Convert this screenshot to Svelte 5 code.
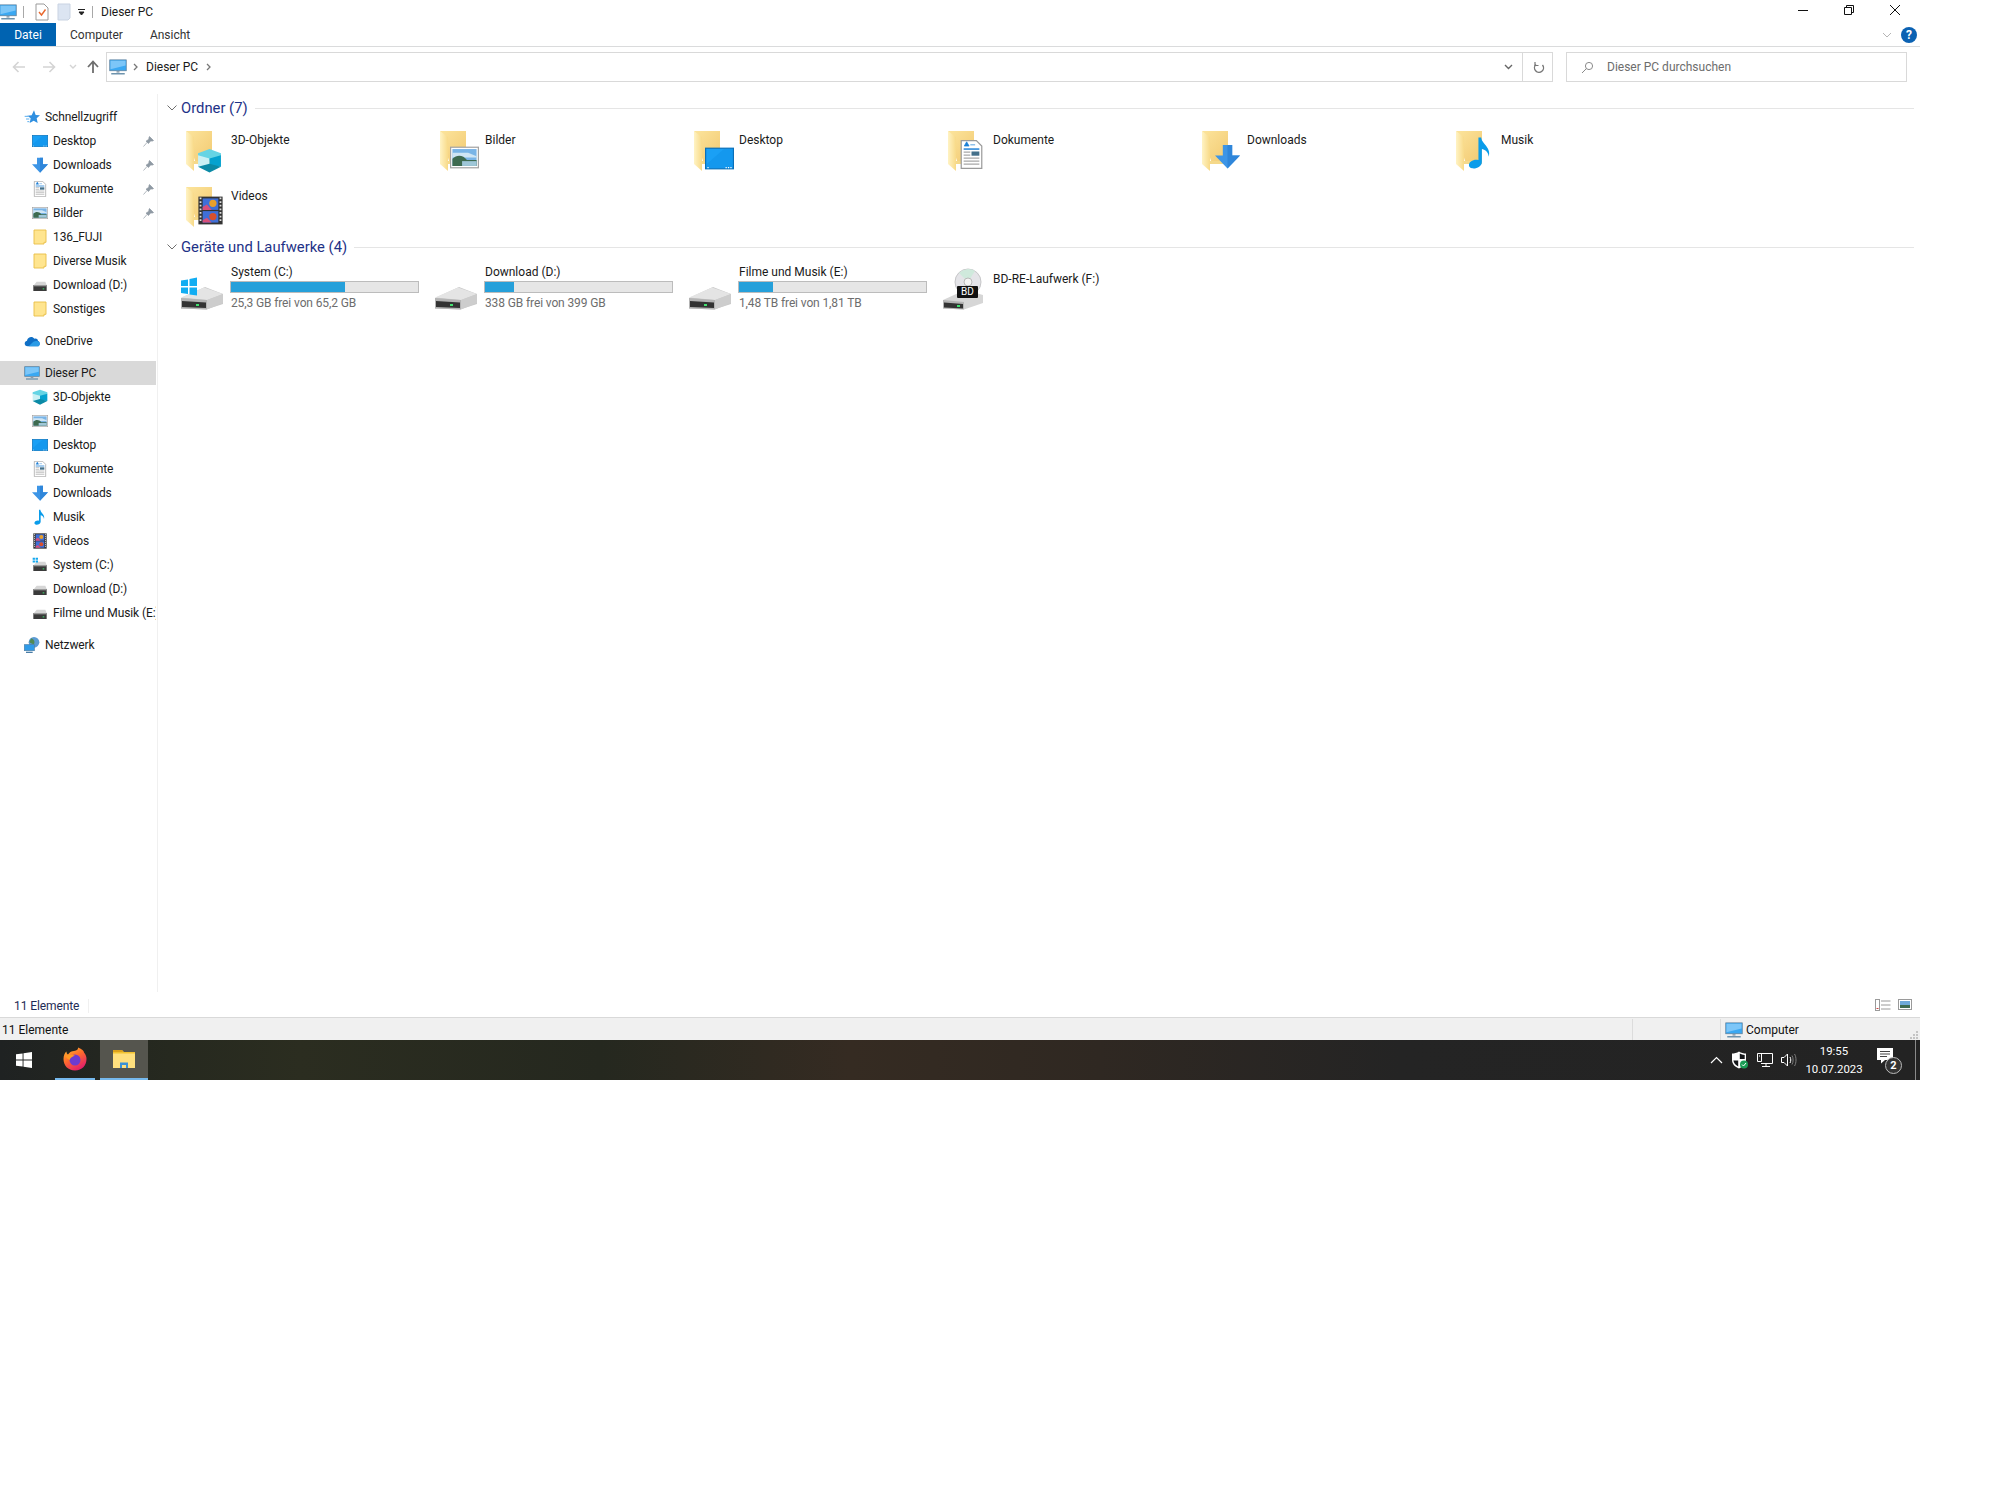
<script lang="ts">
	// Windows 10 Explorer window, "Dieser PC" view, with the taskbar underneath.
	type NavItem = { label: string; icon: string; pinned?: boolean; selected?: boolean };

	const navGroups: { head: NavItem; items: NavItem[] }[] = [
		{
			head: { label: 'Schnellzugriff', icon: 'star' },
			items: [
				{ label: 'Desktop', icon: 'desktop', pinned: true },
				{ label: 'Downloads', icon: 'downloads', pinned: true },
				{ label: 'Dokumente', icon: 'docs', pinned: true },
				{ label: 'Bilder', icon: 'pictures', pinned: true },
				{ label: '136_FUJI', icon: 'folder' },
				{ label: 'Diverse Musik', icon: 'folder' },
				{ label: 'Download (D:)', icon: 'disk' },
				{ label: 'Sonstiges', icon: 'folder' }
			]
		},
		{ head: { label: 'OneDrive', icon: 'cloud' }, items: [] },
		{
			head: { label: 'Dieser PC', icon: 'pc', selected: true },
			items: [
				{ label: '3D-Objekte', icon: 'cube' },
				{ label: 'Bilder', icon: 'pictures' },
				{ label: 'Desktop', icon: 'desktop' },
				{ label: 'Dokumente', icon: 'docs' },
				{ label: 'Downloads', icon: 'downloads' },
				{ label: 'Musik', icon: 'music' },
				{ label: 'Videos', icon: 'video' },
				{ label: 'System (C:)', icon: 'sysdisk' },
				{ label: 'Download (D:)', icon: 'disk' },
				{ label: 'Filme und Musik (E:)', icon: 'disk' }
			]
		},
		{ head: { label: 'Netzwerk', icon: 'network' }, items: [] }
	];

	// size/right/bottom place the overlay glyph on the folder; each one sits differently
	const folders = [
		{ label: '3D-Objekte', icon: 'cube', size: 25, right: 7, bottom: 3 },
		{ label: 'Bilder', icon: 'pictures', size: 29, right: 4, bottom: 4 },
		{ label: 'Desktop', icon: 'desktop', size: 29, right: 3, bottom: 3 },
		{ label: 'Dokumente', icon: 'docs', size: 29, right: 5, bottom: 7 },
		{ label: 'Downloads', icon: 'downloads', size: 25, right: 5, bottom: 7 },
		{ label: 'Musik', icon: 'music', size: 33, right: 2, bottom: 7 },
		{ label: 'Videos', icon: 'video', size: 29, right: 4, bottom: 7 }
	];

	const drives = [
		{ label: 'System (C:)', used: 61.2, info: '25,3 GB frei von 65,2 GB', win: true },
		{ label: 'Download (D:)', used: 15.3, info: '338 GB frei von 399 GB', win: false },
		{ label: 'Filme und Musik (E:)', used: 18.4, info: '1,48 TB frei von 1,81 TB', win: false }
	];
</script>

{#snippet art(name: string, size: number)}
	<svg class="art" width={size} height={size} viewBox="0 0 24 24" aria-hidden="true">
		{#if name === 'desktop'}
			<rect x="0.5" y="3.5" width="23" height="17" fill="#1aa0f5" stroke="#0a6fb8" />
			<path d="M1 17 L16 4 H23 V20 H1 Z" fill="#0d8fe8" opacity="0.5" />
			<path d="M2 19.5 H4 M17 19.5 H22" stroke="#fff" stroke-dasharray="1 1" />
		{:else if name === 'cube'}
			<path d="M12 1 L23 5 V8 L12 12 L1 8 V5 Z" fill="#65d4e4" />
			<path d="M1 7 L12 10 V17 L1 18 Z" fill="#c9f0f4" />
			<path d="M23 7 L12 10 V17 L23 18 Z" fill="#05a2cf" />
			<path d="M1 18 L12 15 L23 18 L12 23.5 Z" fill="#0b8aa6" />
		{:else if name === 'pictures'}
			<rect x="0.5" y="3.5" width="23" height="17" fill="#fff" stroke="#a2a2a2" />
			<rect x="2" y="5" width="20" height="14" fill="#79b4e6" />
			<path d="M2 8 H15 L22 11 V12 H2 Z" fill="#cfe5f4" />
			<path d="M2 13 C6 9 11 10 14 14 H22 V19 H2 Z" fill="#3e6b50" />
			<rect x="10" y="15" width="12" height="4" fill="#9fc7d8" />
		{:else if name === 'docs'}
			<path d="M3.5 0.5 H16 L20.5 5 V23.5 H3.5 Z" fill="#fff" stroke="#9a9a9a" />
			<path d="M6 5 L8 1.5 L10 5 Z M11 4 H15" fill="#1b7fd6" stroke="#1b7fd6" stroke-width="0.6" />
			<path d="M5.5 7.5 H18.5" stroke="#1b7fd6" stroke-width="1.2" />
			<path d="M5.5 10 H11 M5.5 12.5 H11 M5.5 15 H18.5 M5.5 17.5 H18.5 M5.5 20 H18.5" stroke="#a8a8a8" />
			<rect x="12" y="9.5" width="6.5" height="3.5" fill="#44708a" />
		{:else if name === 'downloads'}
			<path d="M7.5 1 H16.5 V11 H24 L12 23.5 L0 11 H7.5 Z" fill="#3d95e6" />
			<path d="M12 1 H16.5 V11 H24 L12 23.5 Z" fill="#2f86da" />
		{:else if name === 'music'}
			<path d="M10.5 1 H12.5 C13 6 20 8 18 15 C17.5 11 15 10 13 9.5 V19 C13 22 9 24 6 23.5 C3 23 3 20 5 18.5 C7 17 9 17 10.5 17.5 Z" fill="#0a9cea" />
		{:else if name === 'video'}
			<rect x="2" y="0.5" width="20" height="23" fill="#333" />
			<rect x="5.5" y="2" width="13" height="9.5" fill="#3f6fd8" />
			<rect x="5.5" y="12.5" width="13" height="9.5" fill="#3f6fd8" />
			<path d="M5.5 9 L9 7 L13 11.5 H5.5 Z M5.5 20 L9 18 L13 22 H5.5 Z" fill="#d84f7a" />
			<circle cx="14" cy="6" r="3" fill="#e9a02c" />
			<circle cx="14" cy="17" r="3" fill="#d8502c" />
			<path d="M3 2 H4.5 M3 5 H4.5 M3 8 H4.5 M3 11 H4.5 M3 14 H4.5 M3 17 H4.5 M3 20 H4.5 M19.5 2 H21 M19.5 5 H21 M19.5 8 H21 M19.5 11 H21 M19.5 14 H21 M19.5 17 H21 M19.5 20 H21" stroke="#ddd" stroke-width="1.4" />
		{:else if name === 'folder'}
			<path d="M3 1.5 H21 V20 H18 V22.5 H3 Z" fill="#ffe58f" stroke="#e9c04a" stroke-width="1.4" />
		{:else if name === 'disk' || name === 'sysdisk'}
			<path d="M3 12 L7 7 H20 L22 12 Z" fill="#d6d6d6" />
			<path d="M2 12 H22 V21 H2 Z" fill="#3a3a3a" />
			<rect x="2" y="12" width="20" height="2" fill="#9a9a9a" />
			<rect x="16" y="17" width="2.4" height="1.6" fill="#3dd56b" />
			{#if name === 'sysdisk'}
				<path d="M1 1 H4.4 V4.2 H1 Z M5.4 1 H9 V4.2 H5.4 Z M1 5.2 H4.4 V8.4 H1 Z M5.4 5.2 H9 V8.4 H5.4 Z" fill="#13a7ee" />
			{/if}
		{:else if name === 'star'}
			<path d="M15 2 L17.5 9 L24 9.5 L19 14 L20.5 21 L14.5 17.5 L8.5 21 L10 14 L5 10 L11.5 9.5 Z" fill="#2f8fe0" />
			<path d="M1 11 H6 M3 15 H8 M5 19 H8" stroke="#4ea8ec" stroke-width="1.4" />
		{:else if name === 'cloud'}
			<path d="M5.5 20 C0 20 -0.5 12.5 4.5 11.5 C5.5 6 12.5 4 15.5 8.5 C19 7.5 21 10 21 12 C24.5 12.5 25 20 20 20 Z" fill="#0f6fc6" />
			<path d="M7 20 L14 13 C17 11.5 21 12 21.5 13 C24.5 13 24.5 20 20 20 Z" fill="#2a9be6" />
		{:else if name === 'pc'}
			<rect x="1" y="2.5" width="22" height="14.5" fill="#3aa8f2" stroke="#5f7f99" />
			<path d="M2 3.5 H22 V10 L2 15 Z" fill="#7cc6f8" />
			<path d="M10 17.5 H14 V19.5 H10 Z" fill="#8a9cab" />
			<path d="M3 21 H21" stroke="#6d93ad" stroke-width="2" />
		{:else if name === 'network'}
			<circle cx="15" cy="8" r="8" fill="#5b9bd3" />
			<path d="M11 2 C15 4 17 7 15 11 C13 10 10 10 8 7 Z" fill="#4f8a55" />
			<rect x="0.5" y="11.5" width="15" height="9" fill="#2f9be8" stroke="#4b7da6" />
			<path d="M3 23 H13" stroke="#4b7da6" stroke-width="2" />
		{/if}
	</svg>
{/snippet}

{#snippet bigFolder()}
	<svg class="art" width="48" height="48" viewBox="0 0 48 48" aria-hidden="true">
		<defs>
			<linearGradient id="fb" x1="0" y1="0" x2="1" y2="1">
				<stop offset="0" stop-color="#fce49c" />
				<stop offset="1" stop-color="#f2ca72" />
			</linearGradient>
			<linearGradient id="ff" x1="0" y1="0" x2="1" y2="0">
				<stop offset="0" stop-color="#fff3c4" />
				<stop offset="1" stop-color="#f8da88" />
			</linearGradient>
		</defs>
		<path d="M5 3 H31 V33 H14 Z" fill="url(#fb)" />
		<path d="M5 3 L13 9 V43 L5 36 Z" fill="url(#ff)" />
		<path d="M13 33 H31 V36 H13 Z" fill="#f5d98a" />
	</svg>
{/snippet}

{#snippet bigDrive(win: boolean)}
	<svg class="art" width="48" height="48" viewBox="0 0 48 48" aria-hidden="true">
		<path d="M5 34 L29 23 L47 30 V40 L30 45.5 L5 44.5 Z" fill="#c9c9c9" />
		<path d="M5 33.5 L28 23.5 L47 30 L31 36 Z" fill="#e4e4e4" />
		<path d="M5 34 L31 36 V45.5 L5 44.5 Z" fill="#b4b4b4" />
		<path d="M6 37 L30 38.5 V44 L6 43 Z" fill="#333" />
		<path d="M31 36 L47 30 V39 L31 45.5 Z" fill="#cdcdcd" />
		<rect x="20" y="40" width="3" height="2" fill="#42e06f" />
		{#if win}
			<path d="M5 16.5 L12 15.5 V22 H5 Z M13.5 15 L21 13.5 V22 H13.5 Z M5 23.5 H12 V30 L5 29 Z M13.5 23.5 H21 V31.5 L13.5 30.5 Z" fill="#12adf2" />
		{/if}
	</svg>
{/snippet}

{#snippet bluray()}
	<svg class="art" width="48" height="48" viewBox="0 0 48 48" aria-hidden="true">
		<circle cx="30" cy="18" r="13" fill="#e4e4e8" stroke="#c6c6c8" />
		<path d="M30 18 L21 9 A13 13 0 0 1 37 7 Z" fill="#cfe9dc" />
		<circle cx="30" cy="18" r="4" fill="#f4f4f4" stroke="#b9b9b9" />
		<path d="M5 36 L27 26 L45 31 V39 L26 45.5 L5 44.5 Z" fill="#d6d6d6" />
		<path d="M5 36 L26 38 V45.5 L5 44.5 Z" fill="#b4b4b4" />
		<path d="M6 38.5 L25 40 V44.5 L6 43.5 Z" fill="#333" />
		<rect x="19" y="41" width="3" height="2" fill="#42e06f" />
		<rect x="19" y="22" width="21" height="12" rx="1" fill="#111" />
	</svg>
{/snippet}

<div class="window">
	<div class="titlebar">
		<span class="qa-pc">{@render art('pc', 18)}</span>
		<span class="vsep"></span>
		<svg class="qa-doc" width="14" height="18" viewBox="0 0 14 18" aria-hidden="true">
			<path d="M1 1 H9 L13 5 V17 H1 Z" fill="#fff" stroke="#9a9a9a" />
			<path d="M4 9 L6.5 12 L10.5 6.5" fill="none" stroke="#e8672d" stroke-width="1.4" />
		</svg>
		<svg class="qa-blank" width="14" height="18" viewBox="0 0 14 18" aria-hidden="true">
			<path d="M1 1 H13 V15 L11 17 H1 Z" fill="#dce5f2" stroke="#c9d3e2" />
		</svg>
		<svg class="qa-drop" width="8" height="8" viewBox="0 0 8 8" aria-hidden="true">
			<path d="M0 1.5 H7 M1 4 H6 L3.5 7 Z" stroke="#222" fill="#222" />
		</svg>
		<span class="vsep"></span>
		<span class="title">Dieser PC</span>
		<div class="winctl">
			<svg width="12" height="12" viewBox="0 0 12 12" aria-hidden="true"><path d="M1 6.5 H11" stroke="#111" /></svg>
			<svg width="12" height="12" viewBox="0 0 12 12" aria-hidden="true">
				<path d="M1.5 3.5 H8.5 V10.5 H1.5 Z M3.5 3.5 V1.5 H10.5 V8.5 H8.5" fill="none" stroke="#111" />
			</svg>
			<svg width="12" height="12" viewBox="0 0 12 12" aria-hidden="true"><path d="M1 1 L11 11 M11 1 L1 11" stroke="#111" /></svg>
		</div>
	</div>

	<div class="tabs">
		<span class="tab-file">Datei</span>
		<span class="tab">Computer</span>
		<span class="tab">Ansicht</span>
		<svg class="ribbon-chev" width="10" height="6" viewBox="0 0 10 6" aria-hidden="true">
			<path d="M1 1 L5 5 L9 1" fill="none" stroke="#b5b5b5" />
		</svg>
		<span class="help">?</span>
	</div>

	<div class="addressrow">
		<div class="navbtns">
			<svg width="14" height="12" viewBox="0 0 14 12" aria-hidden="true"><path d="M13 6 H2 M6.5 1 L1.5 6 L6.5 11" fill="none" stroke="#d4d4d4" stroke-width="1.6" /></svg>
			<svg width="14" height="12" viewBox="0 0 14 12" aria-hidden="true"><path d="M1 6 H12 M7.5 1 L12.5 6 L7.5 11" fill="none" stroke="#d4d4d4" stroke-width="1.6" /></svg>
			<svg width="8" height="6" viewBox="0 0 8 6" aria-hidden="true"><path d="M1 1 L4 4 L7 1" fill="none" stroke="#d4d4d4" stroke-width="1.4" /></svg>
			<svg width="14" height="14" viewBox="0 0 14 14" aria-hidden="true"><path d="M7 13 V2 M2 7 L7 1.5 L12 7" fill="none" stroke="#6e6e6e" stroke-width="1.8" /></svg>
		</div>
		<div class="address">
			{@render art('pc', 18)}
			<svg class="crumb" width="5" height="8" viewBox="0 0 5 8" aria-hidden="true"><path d="M1 1 L4 4 L1 7" fill="none" stroke="#777" stroke-width="1.3" /></svg>
			<span class="crumb-text">Dieser PC</span>
			<svg class="crumb" width="5" height="8" viewBox="0 0 5 8" aria-hidden="true"><path d="M1 1 L4 4 L1 7" fill="none" stroke="#777" stroke-width="1.3" /></svg>
			<svg class="addr-chev" width="9" height="6" viewBox="0 0 9 6" aria-hidden="true"><path d="M1 1 L4.5 4.5 L8 1" fill="none" stroke="#666" stroke-width="1.4" /></svg>
			<span class="addr-refresh">
				<svg width="12" height="13" viewBox="0 0 12 13" aria-hidden="true">
					<path d="M3 3.5 A4.5 4.5 0 1 0 9.5 4" fill="none" stroke="#777" stroke-width="1.4" />
					<path d="M2 1 V4.5 H5.5" fill="none" stroke="#777" stroke-width="1.2" />
				</svg>
			</span>
		</div>
		<div class="search">
			<svg width="13" height="13" viewBox="0 0 13 13" aria-hidden="true">
				<circle cx="8" cy="5" r="3.6" fill="none" stroke="#8a8a8a" />
				<path d="M5.4 7.6 L1 12" stroke="#8a8a8a" />
			</svg>
			<span>Dieser PC durchsuchen</span>
		</div>
	</div>

	<div class="body">
		<nav class="pane">
			{#each navGroups as group}
				<div class="navgroup">
					<div class="navrow top" class:selected={group.head.selected}>
						{@render art(group.head.icon, 16)}
						<span>{group.head.label}</span>
					</div>
					{#each group.items as item}
						<div class="navrow sub">
							{@render art(item.icon, 16)}
							<span class="navlabel">{item.label}</span>
							{#if item.pinned}
								<svg class="pin" width="11" height="11" viewBox="0 0 11 11" aria-hidden="true">
									<path d="M6.5 0.5 L10.5 4.5 L9.5 5 L7.5 5 L5.5 7.5 L3 5.2 L5.8 3.3 L6 1.5 Z M4 6.5 L0.5 10.5" fill="#8f9aa4" stroke="#8f9aa4" stroke-width="0.7" />
								</svg>
							{/if}
						</div>
					{/each}
				</div>
			{/each}
		</nav>

		<main class="content">
			<div class="grouphead first">
				<svg width="10" height="6" viewBox="0 0 10 6" aria-hidden="true"><path d="M0.5 0.5 L5 5 L9.5 0.5" fill="none" stroke="#6e6e6e" /></svg>
				<span>Ordner (7)</span>
				<i></i>
			</div>
			<div class="grid folders">
				{#each folders as f}
					<div class="item">
						<div class="bigicon">
							{@render bigFolder()}
							<span class="overlay" style="right: {f.right}px; bottom: {f.bottom}px">{@render art(f.icon, f.size)}</span>
						</div>
						<span class="itemname">{f.label}</span>
					</div>
				{/each}
			</div>

			<div class="grouphead">
				<svg width="10" height="6" viewBox="0 0 10 6" aria-hidden="true"><path d="M0.5 0.5 L5 5 L9.5 0.5" fill="none" stroke="#6e6e6e" /></svg>
				<span>Geräte und Laufwerke (4)</span>
				<i></i>
			</div>
			<div class="grid drives">
				{#each drives as d}
					<div class="drive">
						<div class="bigicon">{@render bigDrive(d.win)}</div>
						<div class="driveinfo">
							<span class="itemname">{d.label}</span>
							<div class="bar"><div class="fill" style="width: {d.used}%"></div></div>
							<span class="free">{d.info}</span>
						</div>
					</div>
				{/each}
				<div class="drive">
					<div class="bigicon">
						{@render bluray()}
						<span class="bdtag">BD</span>
					</div>
					<span class="itemname bdname">BD-RE-Laufwerk (F:)</span>
				</div>
			</div>
		</main>
	</div>

	<div class="viewstatus">
		<span class="count">11 Elemente</span>
		<div class="viewicons">
			<svg width="16" height="12" viewBox="0 0 16 12" aria-hidden="true">
				<rect x="0.5" y="0.5" width="4" height="11" fill="#fff" stroke="#9a9a9a" />
				<path d="M6 2 H15.5 M6 6 H15.5 M6 10 H15.5" stroke="#9a9a9a" />
				<path d="M1.5 9.5 H3.5" stroke="#c44" />
			</svg>
			<svg width="14" height="11" viewBox="0 0 14 11" aria-hidden="true">
				<rect x="0.5" y="0.5" width="13" height="10" fill="#fff" stroke="#9a9a9a" />
				<rect x="2" y="2" width="10" height="7" fill="#6ea9d8" />
				<path d="M2 6 H12 V9 H2 Z" fill="#3e6b50" />
			</svg>
		</div>
	</div>

	<div class="statusbar">
		<span class="status-count">11 Elemente</span>
		<span class="status-sep first"></span>
		<span class="status-sep"></span>
		<span class="status-pc">{@render art('pc', 18)}<span>Computer</span></span>
		<svg class="grip" width="9" height="9" viewBox="0 0 9 9" aria-hidden="true">
			<path d="M7 1 H9 V3 H7 Z M4 4 H6 V6 H4 Z M7 4 H9 V6 H7 Z M1 7 H3 V9 H1 Z M4 7 H6 V9 H4 Z M7 7 H9 V9 H7 Z" fill="#c4c4c4" />
		</svg>
	</div>

	<footer class="taskbar">
		<svg class="start" width="16" height="16" viewBox="0 0 16 16" aria-hidden="true">
			<path d="M0 2.3 L6.6 1.4 V7.5 H0 Z M7.5 1.2 L16 0 V7.5 H7.5 Z M0 8.4 H6.6 V14.6 L0 13.7 Z M7.5 8.4 H16 V16 L7.5 14.8 Z" fill="#fff" />
		</svg>
		<div class="tb-app running">
			<svg width="24" height="24" viewBox="0 0 24 24" aria-hidden="true">
				<defs>
					<linearGradient id="fx" x1="0" y1="0" x2="0.6" y2="1">
						<stop offset="0" stop-color="#ffc62e" />
						<stop offset="0.5" stop-color="#ff6b2c" />
						<stop offset="1" stop-color="#e3206a" />
					</linearGradient>
				</defs>
				<path d="M12 23.5 C5 23.5 0.5 18.5 0.5 12 C0.5 8.5 2 5.5 3.5 4.5 C3.5 6 4 7 5 7.5 C6.5 5 9 4 11 4 C14 3.5 15.5 2 15 0.5 C19 2 21 4 21 5.5 C23 8 23.5 10 23.5 12 C23.5 18.5 19 23.5 12 23.5 Z" fill="url(#fx)" />
				<circle cx="12" cy="13" r="5.5" fill="#6b3bd1" />
				<path d="M2.5 9 C5 7 9 8 12 8.5 C9 10 7 11 6.5 13 C5 12 3.5 11 2.5 9 Z" fill="#ff9a24" />
			</svg>
		</div>
		<div class="tb-app active running">
			<svg width="22" height="18" viewBox="0 0 22 18" aria-hidden="true">
				<path d="M0 0 H9 L11 2 H22 V18 H0 Z" fill="#f2c230" />
				<path d="M0 3.5 H22 V18 H0 Z" fill="#ffe07e" />
				<path d="M0 0 H9 L10 2 H0 Z" fill="#dca11c" />
				<path d="M7 18 V12.5 H15 V18 H13 V15 H9 V18 Z" fill="#3b92d6" />
			</svg>
		</div>
		<div class="tray">
			<svg width="13" height="8" viewBox="0 0 13 8" aria-hidden="true"><path d="M1 7 L6.5 1.5 L12 7" fill="none" stroke="#fff" stroke-width="1.2" /></svg>
			<svg width="18" height="18" viewBox="0 0 18 18" aria-hidden="true">
				<path d="M8 0.5 C10 2 13 2.5 15 2.5 V9 C15 13 12 16 8 17.5 C4 16 1 13 1 9 V2.5 C3 2.5 6 2 8 0.5 Z" fill="#fff" />
				<path d="M8.8 2.6 C10.2 3.4 12 3.9 13.7 4 V8 H8.8 Z M7.2 9.6 V15.6 C4.6 14.2 2.8 12.2 2.4 9.6 Z" fill="#15171a" />
				<circle cx="13" cy="13.5" r="4" fill="#1a9c55" />
				<path d="M11 13.5 L12.5 15 L15 12" fill="none" stroke="#fff" />
			</svg>
			<svg width="16" height="16" viewBox="0 0 16 16" aria-hidden="true">
				<path d="M4 1.5 H15.5 V11.5 H4 M9 11.5 V14.5 M5 14.5 H13 M0.5 1.5 H4.5 V9.5 H0.5 Z M2 4 H3" fill="none" stroke="#fff" />
			</svg>
			<svg width="16" height="14" viewBox="0 0 16 14" aria-hidden="true">
				<path d="M0.5 4.5 H3 L6.5 1 V13 L3 9.5 H0.5 Z M9 4 C10 6 10 8 9 10" fill="none" stroke="#fff" />
				<path d="M11 2.5 C12.5 5 12.5 9 11 11.5 M13.5 1 C15.5 4 15.5 10 13.5 13" fill="none" stroke="#7d7d7d" />
			</svg>
		</div>
		<div class="clock"><span>19:55</span><span>10.07.2023</span></div>
		<div class="notify">
			<svg width="18" height="16" viewBox="0 0 18 16" aria-hidden="true">
				<path d="M0 0 H16 V12 H8 L4 15.5 V12 H0 Z" fill="#fff" />
				<path d="M3 3.5 H13 M3 6 H13 M3 8.5 H10" stroke="#444" />
			</svg>
			<span class="notify-badge">2</span>
		</div>
		<span class="showdesk"></span>
	</footer>
</div>

<style>
	:global(body) {
		background: #fff;
	}
	.window {
		width: 1920px;
		height: 1080px;
		display: flex;
		flex-direction: column;
		font-family: Roboto, 'Liberation Sans', sans-serif;
		font-size: 12px;
		color: #1a1a1a;
		background: #fff;
	}
	.art {
		display: block;
		flex: none;
	}
	.titlebar {
		height: 23px;
		display: flex;
		align-items: center;
		flex: none;
	}
	.qa-pc {
		margin-left: -1px;
	}
	.vsep {
		width: 1px;
		height: 12px;
		background: #a8a8a8;
		margin-left: 6px;
	}
	.qa-doc {
		margin-left: 11px;
	}
	.qa-blank {
		margin-left: 8px;
	}
	.qa-drop {
		margin-left: 7px;
	}
	.title {
		margin-left: 8px;
	}
	.winctl {
		margin-left: auto;
		margin-right: 19px;
		display: flex;
		gap: 34px;
		margin-top: -3px;
	}
	.tabs {
		height: 24px;
		flex: none;
		display: flex;
		align-items: center;
		border-bottom: 1px solid #dadbdc;
		box-sizing: border-box;
	}
	.tab-file {
		width: 56px;
		height: 23px;
		background: #0063b1;
		color: #fff;
		display: flex;
		align-items: center;
		justify-content: center;
	}
	.tab {
		margin-left: 14px;
		margin-right: 13px;
		color: #333;
	}
	.ribbon-chev {
		margin-left: auto;
	}
	.help {
		width: 16px;
		height: 16px;
		border-radius: 50%;
		background: #0b62b3;
		color: #fff;
		font-weight: 700;
		font-size: 12px;
		line-height: 16px;
		text-align: center;
		margin: 0 3px 0 9px;
	}
	.addressrow {
		height: 41px;
		flex: none;
		display: flex;
		align-items: center;
		box-sizing: border-box;
		padding-top: 5px;
		padding-bottom: 6px;
	}
	.navbtns {
		width: 106px;
		box-sizing: border-box;
		padding-left: 12px;
		display: flex;
		align-items: center;
		gap: 16px;
	}
	.navbtns svg:nth-child(3) {
		margin-left: -3px;
	}
	.navbtns svg:nth-child(4) {
		margin-left: -7px;
	}
	.address {
		width: 1447px;
		height: 30px;
		box-sizing: border-box;
		border: 1px solid #d9d9d9;
		display: flex;
		align-items: center;
		padding-left: 2px;
	}
	.crumb {
		margin-left: 6px;
	}
	.crumb-text {
		margin-left: 8px;
	}
	.crumb-text + .crumb {
		margin-left: 8px;
	}
	.addr-chev {
		margin-left: auto;
		margin-right: 9px;
	}
	.addr-refresh {
		width: 30px;
		height: 28px;
		box-sizing: border-box;
		padding-left: 2px;
		border-left: 1px solid #d9d9d9;
		display: flex;
		align-items: center;
		justify-content: center;
	}
	.search {
		width: 341px;
		height: 30px;
		margin-left: 13px;
		box-sizing: border-box;
		border: 1px solid #d9d9d9;
		display: flex;
		align-items: center;
		gap: 13px;
		padding-left: 14px;
		color: #6d6d6d;
	}
	.body {
		flex: 1;
		display: flex;
		min-height: 0;
		padding-top: 6px;
		margin-bottom: 2px;
	}
	.pane {
		width: 158px;
		flex: none;
		box-sizing: border-box;
		border-right: 1px solid #f0f0f0;
		padding: 11px 1px 0 0;
	}
	.navgroup {
		margin-bottom: 8px;
	}
	.navrow {
		height: 24px;
		display: flex;
		align-items: center;
		gap: 5px;
		white-space: nowrap;
		overflow: hidden;
		letter-spacing: -0.1px;
	}
	.navrow.top {
		padding-left: 24px;
	}
	.navrow.sub {
		padding-left: 32px;
	}
	.navrow.selected {
		background: #d9d9d9;
	}
	.navlabel {
		flex: 1;
		overflow: hidden;
	}
	.pin {
		margin-right: 2px;
		flex: none;
	}
	.content {
		flex: 1;
		min-width: 0;
		padding-left: 9px;
		padding-right: 6px;
	}
	.grouphead {
		height: 24px;
		display: flex;
		align-items: center;
		gap: 4px;
		color: #1e3287;
		font-size: 14.8px;
		white-space: nowrap;
	}
	.grouphead.first {
		margin-top: 2px;
	}
	.grouphead i {
		flex: 1;
		height: 1px;
		background: #e5e5e5;
		margin-left: 3px;
	}
	.grid {
		display: grid;
		grid-template-columns: repeat(6, 254px);
		margin-left: 9px;
	}
	.folders {
		grid-auto-rows: 56px;
		padding-top: 3px;
	}
	.item {
		display: flex;
		padding: 5px 0 0 5px;
		gap: 2px;
	}
	.bigicon {
		position: relative;
		width: 48px;
		height: 48px;
		flex: none;
	}
	/* overlay glyph sits on the folder's lower right corner */
	.overlay {
		position: absolute;
	}
	.itemname {
		display: block;
		line-height: 16px;
		white-space: nowrap;
	}
	.item .itemname {
		margin-top: 4px;
	}
	.drives {
		height: 56px;
		padding-top: 5px;
	}
	.drive {
		display: flex;
		gap: 7px;
	}
	.driveinfo {
		width: 189px;
	}
	.bar {
		height: 12px;
		margin: 1px 1px 2px -1px;
		border: 1px solid #bcbcbc;
		background: #e6e6e6;
		box-sizing: border-box;
	}
	.fill {
		height: 100%;
		background: #26a0da;
	}
	.free {
		color: #6d6d6d;
		line-height: 16px;
		letter-spacing: -0.12px;
	}
	.bdname {
		margin-top: 7px;
	}
	.bdtag {
		position: absolute;
		left: 19px;
		top: 22px;
		width: 21px;
		text-align: center;
		color: #fff;
		font-size: 10px;
		line-height: 12px;
	}
	.viewstatus {
		height: 24px;
		flex: none;
		display: flex;
		align-items: center;
		padding-left: 14px;
		padding-right: 8px;
		box-sizing: border-box;
		border-bottom: 1px solid #d9d9d9;
	}
	.count {
		color: #1e2c55;
		padding-right: 9px;
		letter-spacing: -0.1px;
		border-right: 1px solid #f0f0f0;
	}
	.viewicons {
		margin-left: auto;
		display: flex;
		align-items: center;
		gap: 7px;
		margin-top: -2px;
	}
	.statusbar {
		height: 22px;
		flex: none;
		box-sizing: border-box;
		padding-top: 1px;
		background: #f0f0f0;
		display: flex;
		align-items: center;
		padding-left: 2px;
		position: relative;
		color: #111;
	}
	.status-count {
		width: 1630px;
	}
	.status-sep {
		width: 1px;
		height: 21px;
		background: #dcdcdc;
	}
	.status-sep.first {
		margin-right: 87px;
	}
	.status-pc {
		display: flex;
		align-items: center;
		gap: 3px;
		margin-left: 4px;
	}
	.grip {
		position: absolute;
		right: 2px;
		bottom: 1px;
	}
	.taskbar {
		height: 40px;
		flex: none;
		display: flex;
		align-items: center;
		color: #fff;
		background: linear-gradient(
			90deg,
			#1f2222 0,
			#26291f 170px,
			#2b2d20 300px,
			#25281f 600px,
			#352b22 850px,
			#2f2822 1100px,
			#242424 1400px,
			#232323 100%
		);
	}
	.start {
		margin-left: 16px;
		margin-right: 23px;
	}
	.tb-app {
		height: 40px;
		display: flex;
		align-items: center;
		justify-content: center;
		box-sizing: border-box;
		width: 40px;
		margin-right: 5px;
		position: relative;
	}
	.tb-app.running {
		border-bottom: 2px solid #76b9ed;
	}
	.tb-app.active {
		width: 48px;
		background: #55554e;
		margin-right: 0;
	}
	.tray {
		margin-left: auto;
		display: flex;
		align-items: center;
		gap: 8px;
	}
	.clock {
		width: 74px;
		display: flex;
		flex-direction: column;
		align-items: center;
		gap: 4px;
		line-height: 14px;
		font-size: 11.4px;
		margin-right: 2px;
		margin-top: -1px;
	}
	.notify {
		position: relative;
		width: 24px;
		height: 24px;
		margin-left: 4px;
	}
	.notify-badge {
		position: absolute;
		right: -1px;
		bottom: -2px;
		width: 15px;
		height: 15px;
		border-radius: 50%;
		border: 1px solid #bbb;
		background: #333;
		text-align: center;
		line-height: 15px;
		font-size: 11px;
		font-weight: 700;
	}
	.showdesk {
		width: 1px;
		height: 40px;
		background: #8a8a8a;
		margin: 0 4px 0 14px;
	}
</style>
